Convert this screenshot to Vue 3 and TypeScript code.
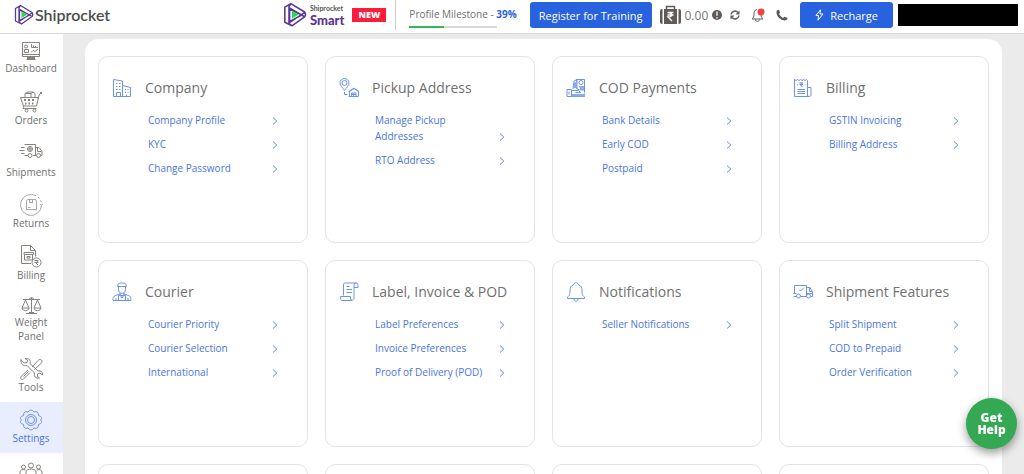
<script setup lang="ts">
interface Icon {
  w: number
  h: number
  d: string
  fill?: string
}

interface NavItem {
  label: string
  icon: Icon
  active?: boolean
  iconOnly?: boolean
  light?: boolean
}

interface Card {
  title: string
  icon: Icon
  links: string[]
}

const nav: NavItem[] = [
  {
    label: 'Dashboard',
    icon: {
      w: 20,
      h: 20,
      d: 'M1.5 1.5h17v14h-17zM1.5 13.5h17M7.5 15.5v2M12.5 15.5v2M5.5 18.5h9M3.5 5.5a1.5 1.5 0 1 0 3 0a1.5 1.5 0 1 0 -3 0M3.5 8.5h4v3h-4zM10.5 3v3.5h6.5M12.5 4.500v2M14.500 5v1.500M10 11.500l2-2l2 1l3-2.500',
      fill: 'M6 16h8v2h-8z',
    },
  },
  {
    label: 'Orders',
    icon: {
      w: 24,
      h: 23,
      d: 'M1.500 7.500h18l-2 8.500h-13zM19 9l1.500-5l2-1M6 7V3.500l3-1.500h5l2 1.500V7M6 3.500h6V7M12 3.500l2-1.500M4.500 16l-.5 2.500h13.500M6 20.500a1.500 1.500 0 1 0 3 0a1.500 1.500 0 1 0-3 0M14 20.500a1.500 1.500 0 1 0 3 0a1.500 1.500 0 1 0-3 0',
      fill: 'M5 9h2v2h-2zM9 9h2v2h-2zM13 9h2v2h-2zM6 12.500h1.500v2h-1.500zM9.500 12.500h1.500v2h-1.500zM13 12.500h1.500v2h-1.500zM21 2h2v2h-2z',
    },
  },
  {
    label: 'Shipments',
    icon: {
      w: 24,
      h: 23,
      d: 'M5.500 2.500h11v11h-2.500M9 13.500h-3.500M16.500 5.500h3.500l3 4v4h-1.500M16.500 13.500h.5M18.500 5.500v4h4M2 5.500h3.500M.5 8.500h5M2 11.500h3.500M9 13.500a2 2 0 1 0 4 0a2 2 0 1 0-4 0M17.500 13.500a2 2 0 1 0 4 0a2 2 0 1 0-4 0M8.500 7a2.500 2.500 0 1 0 5 0a2.500 2.500 0 1 0-5 0M11 4.500v5M8.500 7h5',
    },
  },
  {
    label: 'Returns',
    light: true,
    icon: {
      w: 24,
      h: 22,
      d: 'M17 1.700A10.500 10.500 0 1 0 22.500 11.500M22.500 11.500l-1.500-1.500M22.500 11.500l1-1.500M19 3l1.500 1.500M21.500 6.500l.5 1.500M7.500 7l1-1.500h8l1 1.500v8.500h-10zM10.500 5.500v3.500l1.500-1l1.500 1v-3.500M9 13.500h2.500',
    },
  },
  {
    label: 'Billing',
    icon: {
      w: 24,
      h: 23,
      d: 'M12 18.500H2.500V.5h9l5 5v6M11.500 .5v5h5M5 7.500h9.500v2h-9.500zM5.500 9.500h8v5.500h-8zM8 11.500h3v1.500h-3zM13 17.500a4.500 4.500 0 1 0 9 0a4.500 4.500 0 1 0-9 0M15.500 15.500h4M15.500 17.500h4M16.500 15.500c3 0 3 2 0 2l2.500 2.500',
    },
  },
  {
    label: 'Weight Panel',
    icon: {
      w: 22,
      h: 18,
      d: 'M11.500 1v15M3 2.500h17M6 16.500h11M5.500 3l-3.500 8h7zM17.500 3l-3.500 8h7zM2 11c0 3.500 7 3.500 7 0M14 11c0 3.500 7 3.500 7 0M9.500 2.500a2 2 0 0 1 4 0M9 15.500h5',
    },
  },
  {
    label: 'Tools',
    icon: {
      w: 24,
      h: 22,
      d: 'M2 2l3 3l3-.500l.500-2.500l-2.500-1.500c4-.500 6 2 5 5l8 7.500c3-.500 5 1 4.500 4l-2.500-2l-2.500 1l0 2.500l2 1.500c-4 1-6-2-5-5l-7.500-7.500c-4 1-6.500-2-6-6zM13 9l6-6.500c1-1 2.500-1.500 3.500-.500s.5 2.500-.500 3.500l-6.500 6M9 12l-6.500 6c-2 2 0 4.500 2 3l6.500-6.500M4.500 18.500l5-5',
    },
  },
  {
    label: 'Settings',
    active: true,
    icon: {
      w: 24,
      h: 22,
      d: 'M9 3Q12-1 15 3Q19.500 1.500 19.500 6.500Q24.500 8 21.500 11Q24.500 14 19.500 15.500Q19.500 20.500 15 19Q12 23 9 19Q4.500 20.500 4.500 15.500Q-.5 14 2.500 11Q-.5 8 4.500 6.500Q4.500 1.500 9 3zM6.500 11a5.500 5.500 0 1 0 11 0a5.500 5.500 0 1 0-11 0M8.500 11a3.500 3.500 0 1 0 7 0a3.500 3.500 0 1 0-7 0',
    },
  },
  {
    label: 'Users',
    iconOnly: true,
    icon: {
      w: 24,
      h: 22,
      d: 'M9.500 5.500a2.500 2.500 0 1 0 5 0a2.500 2.500 0 1 0-5 0M2.500 7a2 2 0 1 0 4 0a2 2 0 1 0-4 0M17.500 7a2 2 0 1 0 4 0a2 2 0 1 0-4 0M7 15v-3c0-4 10-4 10 0v3M1 14v-2c0-2 2-3 5.500-2M23 14v-2c0-2-2-3-5.500-2',
    },
  },
]

const cards: Card[] = [
  {
    title: 'Company',
    icon: {
      w: 20,
      h: 20,
      d: 'M1.500 18.500V1.500l9 1.500v15.500M10.500 7.500l8 2v9h-17M4.500 18.500v-4h4v4M14.500 18.500v-2M4 5.500h1.500M7 5.500h1.500M4 8.500h1.500M7 8.500h1.500M4 11.500h1.500M7 11.500h1.500M13 11.500h1M15.500 11.500h1M13 14.500h1M15.500 14.500h1',
    },
    links: ['Company Profile', 'KYC', 'Change Password'],
  },
  {
    title: 'Pickup Address',
    icon: {
      w: 20,
      h: 20,
      d: 'M5.500 12.500c-2-3-4.500-5-4.500-7.500a4.500 4.500 0 0 1 9 0c0 2.500-2.500 4.500-4.500 7.500zM3 5a2.500 2.500 0 1 0 5 0a2.500 2.500 0 1 0-5 0M5.500 14v2.500h3M9.500 18.500h10M10.500 18v-4.500l4.500-3l4.500 3v4.500M9.500 13.500l5.500-3.500l5 3.500M12.500 18v-3h4.500v3M14.500 15v3M12.500 16.500h4.500',
    },
    links: ['Manage Pickup Addresses', 'RTO Address'],
  },
  {
    title: 'COD Payments',
    icon: {
      w: 20,
      h: 20,
      d: 'M1 11.500h4.500v7h-4.500zM5.500 12.500h7l2 2h-5M5.500 18.500h13v-3M7 11l1-8l3-1.500v9M11 1.500h7.500v13M10.500 1.500v9l3 1.500h5M13 4.500a2 2 0 1 0 4 0a2 2 0 1 0-4 0M13 8.500l4 2M3 13.500v3',
      fill: 'M8 5l3-2v7h-4zM14 8h4v4h-4zM6 16h13v2.500h-13z',
    },
    links: ['Bank Details', 'Early COD', 'Postpaid'],
  },
  {
    title: 'Billing',
    icon: {
      w: 20,
      h: 20,
      d: 'M1.500 1v17.500h14.500M1.500 1.500l1.500 1l1.500-1l1.500 1l1.500-1l1.500 1l1.500-1l1.500 1l1.500-1l1 1v16M14.500 9.500h3.500v7.500c0 2-3.500 2-3.500 0M6.500 5h3.500M6.500 6.500h3.500M7.500 5c3 0 2 3 0 2l2 2M4 7h1M11.500 7h1M4.500 11.500h7.500M4.500 13.500h7.500M4.500 15.500h7.500',
    },
    links: ['GSTIN Invoicing', 'Billing Address'],
  },
  {
    title: 'Courier',
    icon: {
      w: 20,
      h: 20,
      d: 'M6 5V2.500c0-2 8-2 8 0V5M5.500 4.500h9M6.500 5v2.500c0 5 7 5 7 0V5M8 10.500v2l2 1.500l2-1.500v-2M8 12l-4.500 1.500c-2 .5-2.500 2.500-2.500 5h18c0-2.500-.5-4.500-2.500-5l-4.500-1.500M6.500 13.500h7v5h-7zM9 13.500v2h2v-2M4 16v2.500M16 16v2.500',
    },
    links: ['Courier Priority', 'Courier Selection', 'International'],
  },
  {
    title: 'Label, Invoice & POD',
    icon: {
      w: 20,
      h: 20,
      d: 'M4.500 13.500V3c0-2 1-2 2-2h11c-2 0-2.500 1-2.500 3v12.500c0 2-3.500 2.500-3.500 0v-2h-10v2c0 1 .5 2 1.500 2h10M17.500 1c1.500 0 1.500 2 1.500 4.500h-4M7.500 4.500h3M7.500 7.500h5.500M7.500 10.500h5.500',
    },
    links: ['Label Preferences', 'Invoice Preferences', 'Proof of Delivery (POD)'],
  },
  {
    title: 'Notifications',
    icon: {
      w: 20,
      h: 20,
      d: 'M8 2.500c0-2.500 4-2.500 4 0c3 1 4 3 4 6c0 5 1 5.500 2.500 6.500v1.500h-17v-1.500c1.500-1 2.500-1.500 2.500-6.500c0-3 1-5 4-6zM8 17c0 3 4 3 4 0',
    },
    links: ['Seller Notifications'],
  },
  {
    title: 'Shipment Features',
    icon: {
      w: 20,
      h: 20,
      d: 'M1.500 11.500v-8h12v11h-6M.5 11.500h3M.5 14.500h3M13.500 5.500h3.500l2.500 4.500v4.500h-1.500M16.500 5.500v4h3M3.500 14a2 2 0 1 0 4 0a2 2 0 1 0-4 0M13.500 14a2 2 0 1 0 4 0a2 2 0 1 0-4 0M6 7.500l1.500 1.500l3-3M13.500 11.500h6',
    },
    links: ['Split Shipment', 'COD to Prepaid', 'Order Verification'],
  },
]

const emptyCards = 4
const milestone = 39
</script>

<template>
  <div class="shell">
    <header class="topbar">
      <a class="brand" href="#">
        <svg class="mark" width="20" height="22" viewBox="0 0 20 22" aria-hidden="true">
          <path class="mark-line" d="M1.500 4.500L6.500 1.500L18 8.500q1.500 2 0 4L7.500 20L1.500 17zM5.500 6v10.500L15.500 11zM1.500 4.500v12M6.500 1.500L5 4v14l2.500 2M5 5l13 7.500M5 17.500L18 9" />
          <path class="mark-play" d="M7.500 7.500v6.500l5.500-3.200z" />
        </svg>
        <span class="brand-name">Shiprocket</span>
      </a>

      <a class="smart" href="#">
        <svg class="mark" width="24" height="28" viewBox="0 0 20 22" aria-hidden="true">
          <path class="mark-line" d="M1.500 4.500L6.500 1.500L18 8.500q1.500 2 0 4L7.500 20L1.500 17zM5.500 6v10.500L15.500 11zM1.500 4.500v12M6.500 1.500L5 4v14l2.500 2M5 5l13 7.500M5 17.500L18 9" />
          <path class="mark-play" d="M7.500 7.500v6.500l5.500-3.200z" />
        </svg>
        <span class="smart-text">
          <span class="smart-top">Shiprocket</span>
          <span class="smart-bottom">Smart</span>
        </span>
        <span class="new">NEW</span>
      </a>

      <div class="milestone">
        <span>Profile Milestone - <b>{{ milestone }}%</b></span>
        <div class="bar"><div class="bar-fill" :style="{ width: milestone + '%' }"></div></div>
      </div>

      <button class="primary register" type="button">Register for Training</button>

      <div class="wallet">
        <svg width="21" height="20" viewBox="0 0 21 20" aria-hidden="true">
          <path class="solid" d="M4 4h13v15H4zM0 6q0-2 2-2h.5v15H2q-2 0-2-2zM18.500 4h.5q2 0 2 2v11q0 2-2 2h-.5z" />
          <path class="case-handle" d="M6.500 4V1.500h8V4" />
          <path class="rupee" d="M7.500 7.500h6M7.500 10h6M8 7.500c5 0 5 4.500 0 4.500l4 4" />
        </svg>
        <span class="amount">0.00</span>
        <svg width="10" height="10" viewBox="0 0 10 10" aria-hidden="true">
          <circle class="solid" cx="5" cy="5" r="5" />
          <path class="info" d="M5 1.500v4.200M5 7v1.500" />
        </svg>
      </div>

      <div class="tools">
        <button class="tool" type="button" aria-label="Refresh">
          <svg width="10" height="10" viewBox="0 0 10 10">
            <path class="dark-line" d="M1 4.500A4 4 0 0 1 8 2.500M9 5.500A4 4 0 0 1 2 7.500" />
            <path class="solid" d="M9.500 .5v4h-4zM.5 9.500v-4h4z" />
          </svg>
        </button>
        <button class="tool" type="button" aria-label="Alerts">
          <svg width="14" height="14" viewBox="0 0 14 14">
            <path class="bell-line" d="M6 1.500c-2.500.5-3 2.500-3 5c0 2.500-1 3.500-2 4.500h11c-1-1-2-2-2-4.500M4.500 11.500c0 2.500 4 2.500 4 0" />
            <circle class="alert" cx="10" cy="4" r="3.500" />
          </svg>
        </button>
        <button class="tool" type="button" aria-label="Call">
          <svg width="12" height="12" viewBox="0 0 12 12">
            <path class="solid" d="M1 1.500L2.500 .8q.6 0 .8.600l.8 2.200L3 4.900q1.400 2.600 4 4L8.400 7.800l2.700 1q.5.200.4.800Q11 11.500 9 11.500C4 11.200.5 7.500.5 3Q.4 2 1 1.500z" />
          </svg>
        </button>
      </div>

      <button class="primary recharge" type="button">
        <svg width="9" height="12" viewBox="0 0 9 12" aria-hidden="true">
          <path d="M5.500 .8L1 6.500h2.500L3 11.200L8 5H5z" />
        </svg>
        Recharge
      </button>
      <div class="account"></div>
    </header>

    <div class="body">
      <nav class="sidebar" aria-label="Main">
        <a
          v-for="item in nav"
          :key="item.label"
          class="nav-item"
          :class="{ active: item.active, light: item.light }"
          :aria-label="item.label"
          href="#"
        >
          <svg class="line-icon" :width="item.icon.w" :height="item.icon.h" :viewBox="`0 0 ${item.icon.w} ${item.icon.h}`" aria-hidden="true">
            <path :d="item.icon.d" />
            <path v-if="item.icon.fill" class="filled" :d="item.icon.fill" />
          </svg>
          <span v-if="!item.iconOnly">{{ item.label }}</span>
        </a>
      </nav>

      <main class="content">
        <div class="panel">
          <section v-for="card in cards" :key="card.title" class="card">
            <div class="card-head">
              <svg class="line-icon" :width="card.icon.w" :height="card.icon.h" :viewBox="`0 0 ${card.icon.w} ${card.icon.h}`" aria-hidden="true">
                <path :d="card.icon.d" />
                <path v-if="card.icon.fill" class="filled soft" :d="card.icon.fill" />
              </svg>
              <h2>{{ card.title }}</h2>
            </div>
            <ul>
              <li v-for="link in card.links" :key="link">
                <a href="#">
                  <span>{{ link }}</span>
                  <svg width="6" height="8" viewBox="0 0 6 8" aria-hidden="true"><path d="M1 .5L4.800 4L1 7.500" /></svg>
                </a>
              </li>
            </ul>
          </section>
          <section v-for="n in emptyCards" :key="n" class="card"></section>
        </div>
      </main>
    </div>

    <button class="help" type="button">Get Help</button>
  </div>
</template>

<style>
body {
  margin: 0;
}
</style>

<style scoped>
.shell {
  display: flex;
  flex-direction: column;
  height: 100vh;
  overflow: hidden;
  background: #ebebeb;
  color: #707070;
  font-family: "Open Sans", "Noto Sans", sans-serif;
  font-size: 10px;
}

a {
  color: inherit;
  text-decoration: none;
}

button {
  font-family: inherit;
  border: 0;
  padding: 0;
  cursor: pointer;
}

svg {
  display: block;
  flex: none;
}

.topbar {
  display: flex;
  align-items: center;
  flex: none;
  box-sizing: border-box;
  height: 34px;
  padding: 0 6px 3px 14px;
  background: #fff;
  border-bottom: 1px solid #d9d9d9;
}

.brand {
  display: flex;
  align-items: center;
  gap: 1px;
}

.mark-line {
  fill: none;
  stroke: #5b3796;
  stroke-width: 1.3;
  stroke-linejoin: round;
}

.mark-play {
  fill: #1fe04b;
}

.brand-name {
  font-family: Lato, sans-serif;
  font-size: 16px;
  font-weight: 600;
  line-height: 20px;
  color: #4c4b4d;
}

.smart {
  display: flex;
  align-items: center;
  margin-left: auto;
}

.smart-text {
  display: flex;
  flex-direction: column;
  margin: 0 8px 0 3px;
  font-family: Lato, sans-serif;
  font-weight: 700;
}

.smart-top {
  font-size: 7px;
  line-height: 9px;
  color: #555;
}

.smart-bottom {
  font-size: 13px;
  line-height: 14px;
  font-weight: 900;
  color: #5b3796;
}

.new {
  width: 34px;
  font-size: 9px;
  font-weight: 800;
  line-height: 14px;
  text-align: center;
  color: #fff;
  background: #fa1e3c;
}

.milestone {
  display: flex;
  flex-direction: column;
  gap: 4px;
  height: 30px;
  box-sizing: border-box;
  margin-left: 9px;
  padding: 7px 13px 0;
  border-left: 1px solid #ccc;
  line-height: 15px;
  white-space: nowrap;
}

.milestone b {
  color: #2962e0;
}

.bar {
  width: 88px;
  height: 2px;
  background: #d8d8d8;
}

.bar-fill {
  height: 2px;
  background: #34b85a;
}

.primary {
  height: 26px;
  border-radius: 3px;
  background: #2962de;
  color: #fff;
  white-space: nowrap;
}

.register {
  padding: 0 9px;
  font-size: 11px;
}

.wallet {
  display: flex;
  align-items: center;
  gap: 4px;
  margin: 0 8px;
}

.amount {
  font-size: 12px;
  color: #777;
}

.solid {
  fill: #5f5a57;
}

.case-handle,
.dark-line,
.bell-line {
  fill: none;
  stroke: #5f5a57;
  stroke-width: 1.5;
}

.bell-line {
  stroke-width: 1;
}

.rupee,
.info {
  fill: none;
  stroke: #fff;
  stroke-width: 1.3;
}

.alert {
  fill: #f04444;
}

.tools {
  display: flex;
  align-items: center;
  gap: 11px;
  margin-right: 12px;
}

.tool {
  background: none;
}

.recharge {
  display: flex;
  align-items: center;
  gap: 6px;
  padding: 0 15px;
  font-size: 11px;
}

.recharge path {
  fill: none;
  stroke: #fff;
}

.account {
  width: 120px;
  height: 22px;
  margin-left: 5px;
  background: #000;
}

.body {
  display: flex;
  flex: 1;
  min-height: 0;
}

.sidebar {
  width: 63px;
  flex: none;
  background: #fff;
  overflow: hidden;
}

.nav-item {
  display: flex;
  flex-direction: column;
  align-items: center;
  padding: 7px 8px 8px 7px;
  line-height: 14px;
  text-align: center;
}

.line-icon path {
  fill: none;
  stroke: #86827e;
  stroke-width: 1;
  stroke-linejoin: round;
}

.line-icon .filled {
  fill: #86827e;
  stroke: none;
}

.light .line-icon path {
  stroke: #aaa7a4;
}

.active {
  background: #e9eefe;
  color: #4a75e2;
}

.active .line-icon path,
.card .line-icon path {
  stroke: #6d92ec;
}

.card .line-icon .soft {
  fill: #8fabf0;
  stroke: none;
}

.content {
  flex: 1;
  min-width: 0;
  padding: 5px 22px 0;
}

.panel {
  display: grid;
  grid-template-columns: repeat(4, minmax(0, 1fr));
  gap: 17px;
  padding: 17px 13px;
  border-radius: 14px;
  background: #fff;
}

.card {
  box-sizing: border-box;
  min-height: 187px;
  padding: 21px 29px 0 13px;
  border: 1px solid #e2e2f0;
  border-radius: 10px;
}

.card-head {
  display: flex;
  align-items: center;
  gap: 13px;
}

h2 {
  margin: 0;
  font-size: 14px;
  font-weight: 400;
  line-height: 20px;
  white-space: nowrap;
}

ul {
  display: flex;
  flex-direction: column;
  gap: 8px;
  margin: 14px 0 0;
  padding: 0 0 0 36px;
  list-style: none;
}

li a {
  display: flex;
  justify-content: space-between;
  align-items: flex-end;
  gap: 8px;
  line-height: 16px;
  color: #4a75e2;
}

li svg {
  margin-bottom: 3px;
}

li path {
  fill: none;
  stroke: #6189e8;
}

.help {
  position: fixed;
  right: 7px;
  bottom: 25px;
  width: 51px;
  height: 51px;
  padding: 0 8px;
  border-radius: 50%;
  background: #34a853;
  color: #fff;
  font-size: 12px;
  font-weight: 800;
  line-height: 12px;
  box-shadow: 0 4px 10px rgba(0, 0, 0, 0.4);
}
</style>
